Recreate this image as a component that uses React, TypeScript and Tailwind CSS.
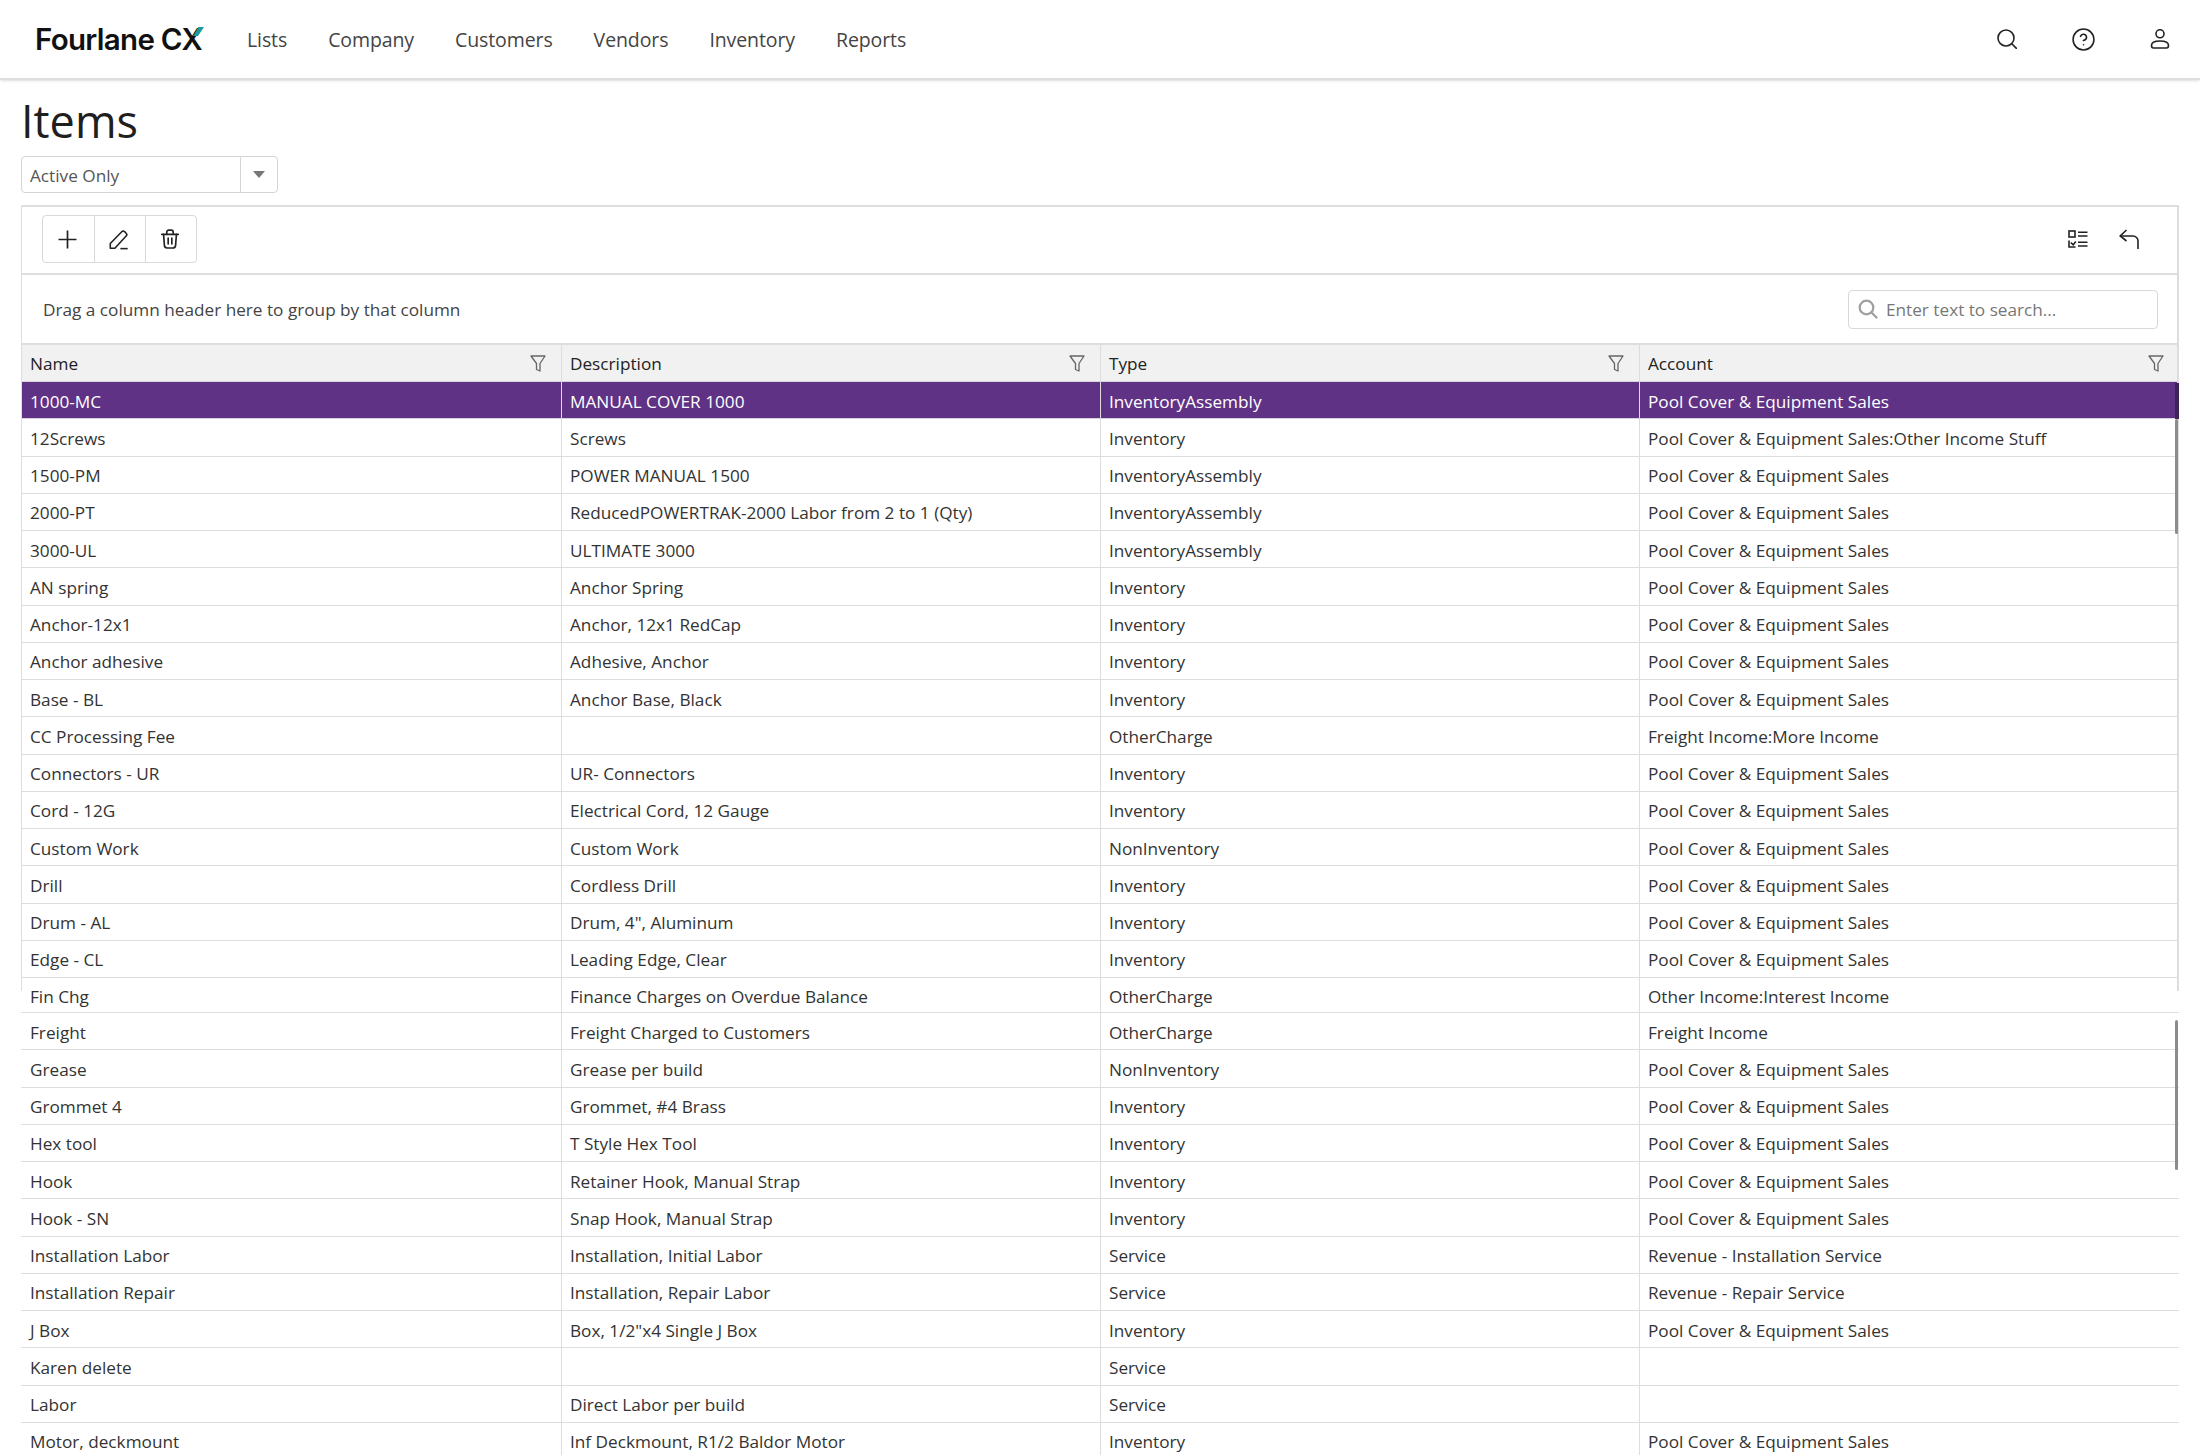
import { CircleHelp } from "lucide-react";

const PCE = "Pool Cover & Equipment Sales";

const topRows = [
  ["1000-MC", "MANUAL COVER 1000", "InventoryAssembly", PCE],
  ["12Screws", "Screws", "Inventory", "Pool Cover & Equipment Sales:Other Income Stuff"],
  ["1500-PM", "POWER MANUAL 1500", "InventoryAssembly", PCE],
  ["2000-PT", "ReducedPOWERTRAK-2000 Labor from 2 to 1 (Qty)", "InventoryAssembly", PCE],
  ["3000-UL", "ULTIMATE 3000", "InventoryAssembly", PCE],
  ["AN spring", "Anchor Spring", "Inventory", PCE],
  ["Anchor-12x1", "Anchor, 12x1 RedCap", "Inventory", PCE],
  ["Anchor adhesive", "Adhesive, Anchor", "Inventory", PCE],
  ["Base - BL", "Anchor Base, Black", "Inventory", PCE],
  ["CC Processing Fee", "", "OtherCharge", "Freight Income:More Income"],
  ["Connectors - UR", "UR- Connectors", "Inventory", PCE],
  ["Cord - 12G", "Electrical Cord, 12 Gauge", "Inventory", PCE],
  ["Custom Work", "Custom Work", "NonInventory", PCE],
  ["Drill", "Cordless Drill", "Inventory", PCE],
  ["Drum - AL", "Drum, 4\", Aluminum", "Inventory", PCE],
  ["Edge - CL", "Leading Edge, Clear", "Inventory", PCE],
];

const bottomRows = [
  ["Freight", "Freight Charged to Customers", "OtherCharge", "Freight Income"],
  ["Grease", "Grease per build", "NonInventory", PCE],
  ["Grommet 4", "Grommet, #4 Brass", "Inventory", PCE],
  ["Hex tool", "T Style Hex Tool", "Inventory", PCE],
  ["Hook", "Retainer Hook, Manual Strap", "Inventory", PCE],
  ["Hook - SN", "Snap Hook, Manual Strap", "Inventory", PCE],
  ["Installation Labor", "Installation, Initial Labor", "Service", "Revenue - Installation Service"],
  ["Installation Repair", "Installation, Repair Labor", "Service", "Revenue - Repair Service"],
  ["J Box", "Box, 1/2\"x4 Single J Box", "Inventory", PCE],
  ["Karen delete", "", "Service", ""],
  ["Labor", "Direct Labor per build", "Service", ""],
  ["Motor, deckmount", "Inf Deckmount, R1/2 Baldor Motor", "Inventory", PCE],
];

const nav = ["Lists", "Company", "Customers", "Vendors", "Inventory", "Reports"];
const headers = ["Name", "Description", "Type", "Account"];

function Funnel() {
  return (
    <svg width="16" height="17" viewBox="0 0 16 17" fill="none" stroke="#666666" strokeWidth="1.3" strokeLinejoin="round">
      <path d="M1 1h14L10 8.5V16L6.5 14.5V8.5z" />
    </svg>
  );
}

function Row({ cells, selected, short }: { cells: string[]; selected?: boolean; short?: boolean }) {
  return (
    <div
      className={`flex border-b ${short ? "h-[35px]" : "h-[37.25px]"} ${
        selected ? "bg-[#5f3285] border-[#d9d2e0] text-white" : "border-[#dddddd] text-[#333333]"
      }`}
    >
      {cells.map((c, i) => (
        <div
          key={i}
          className={`flex items-center pt-[3px] whitespace-nowrap overflow-hidden ${
            i === 0 ? "w-[541px] pl-[9px] border-r border-[#dddddd]" : i < 3 ? "w-[539px] px-2 border-r border-[#dddddd]" : "flex-1 px-2"
          }`}
        >
          {c}
        </div>
      ))}
    </div>
  );
}

export default function App() {
  return (
    <div className="h-[1455px] overflow-hidden bg-white font-['Open_Sans','Noto_Sans',sans-serif] text-[17.2px] text-[#333333]">
      {/* Top bar */}
      <div className="flex h-[80px] items-center border-b-2 border-[#dedede] pl-[35px] pr-[30px] shadow-sm">
        <div className="relative w-[170px] pt-[1px] font-['Inter',sans-serif] text-[29.5px] font-semibold tracking-[-0.7px] text-[#111111]">
          Fourlane CX
          <svg className="absolute right-[1px] top-[11px] h-[9px] w-[11px]" viewBox="0 0 11 9">
            <path d="M5.5 0H11L5 9H0z" fill="#1c9a9a" />
          </svg>
        </div>
        <div className="ml-[42px] flex gap-[41px] pt-[2px] text-[19.5px] tracking-[-0.1px] text-[#444444]">
          {nav.map((n) => (
            <span key={n}>{n}</span>
          ))}
        </div>
        <div className="ml-auto flex items-center gap-[54px] text-[#222222]">
          <svg width="20" height="20" viewBox="0 0 20 20" fill="none" stroke="currentColor" strokeWidth="1.6">
            <circle cx="9" cy="9" r="8" />
            <path d="M15 15l4.5 4.5" strokeLinecap="round" />
          </svg>
          <CircleHelp size={25} strokeWidth={1.5} />
          <svg width="20" height="20" viewBox="0 0 20 20" fill="none" stroke="currentColor" strokeWidth="1.6">
            <circle cx="10" cy="4.8" r="4" />
            <path d="M1.5 16.5C1.5 13.5 5 12 10 12s8.5 1.5 8.5 4.5c0 1.5-.7 2.5-2 2.5h-13c-1.3 0-2-1-2-2.5z" />
          </svg>
        </div>
      </div>

      <div className="pl-[21px] pr-[21px]">
        <h1 className="mt-[10px] h-[66px] text-[45px] leading-[61px] font-normal text-[#1f1f1f]">Items</h1>

        {/* Status filter */}
        <div className="flex h-[37px] w-[257px] items-center rounded-[4px] border border-[#d5d5d5] text-[#555555]">
          <span className="flex-1 pl-2 pt-[2px]">Active Only</span>
          <span className="flex h-full w-[37px] items-center justify-center border-l border-[#d5d5d5]">
            <span className="h-0 w-0 border-x-[6px] border-t-[7px] border-x-transparent border-t-[#777777]" />
          </span>
        </div>

        {/* Grid */}
        <div className="relative mt-[12px] rounded-t-[3px] border-t-2 border-[#dedede]">
          <span className="absolute -top-[2px] left-0 h-[786px] w-px bg-[#dddddd]" />
          <span className="absolute -top-[2px] right-0 h-[786px] w-[2px] bg-[#dddddd]" />
          <span className="absolute right-0 top-[176px] h-[36px] w-[4px] bg-[#3e2358]" />
          <span className="absolute right-[1px] top-[212px] h-[115px] w-[3px] rounded-full bg-[#8c8c8c]" />
          <span className="absolute right-[1px] top-[813px] h-[150px] w-[3px] rounded-full bg-[#8c8c8c]" />

          <div className="flex h-[68px] items-center justify-between border-b-2 border-[#dedede] pb-[2px] pl-[21px] pr-[40px]">
            <div className="flex h-[48px] rounded-[4px] border border-[#d9d9d9] text-[#222222]">
              <div className="flex w-[51px] items-center justify-center pr-[3px]">
                <svg width="19" height="19" viewBox="0 0 19 19" fill="none" stroke="currentColor" strokeWidth="1.7">
                  <path d="M9.5 0.5v18M0.5 9.5h18" />
                </svg>
              </div>
              <div className="flex w-[51px] items-center justify-center border-l border-[#d9d9d9] pr-[3px]">
                <svg width="22" height="22" viewBox="0 0 24 24" fill="none" stroke="currentColor" strokeWidth="1.7" strokeLinejoin="round">
                  <path d="M2.5 22v-5L15 4a2.2 2.2 0 0 1 3.1 0l1.7 1.7a2.2 2.2 0 0 1 0 3.1L7.5 22z" />
                  <path d="M13.5 22.5h8" />
                </svg>
              </div>
              <div className="flex w-[51px] items-center justify-center border-l border-[#d9d9d9] pr-[3px]">
                <svg width="22" height="22" viewBox="0 0 24 24" fill="none" stroke="currentColor" strokeWidth="1.8" strokeLinecap="round">
                  <path d="M5 7l.9 12a3 3 0 0 0 3 2.8h6.2a3 3 0 0 0 3-2.8L19 7" />
                  <path d="M3 7h18" />
                  <path d="M8.5 7V4.5a2.2 2.2 0 0 1 2.2-2.2h2.6a2.2 2.2 0 0 1 2.2 2.2V7" />
                  <path d="M10 11v6.5M14 11v6.5" />
                </svg>
              </div>
            </div>
            <div className="flex items-center gap-[31px] text-[#222222]">
              <svg width="20" height="18" viewBox="0 0 20 18" fill="none" stroke="currentColor" strokeWidth="1.6">
                <rect x="1" y="1" width="6" height="6" />
                <path d="M10 2.2h9.5M10 6h9.5M10 12.2h9.5M10 16h9.5" />
                <path d="M1 10.5V17h6.5M2.8 12.5l2.4 2.4 2.6-3.4" />
              </svg>
              <svg width="20" height="20" viewBox="0 0 20 20" fill="none" stroke="currentColor" strokeWidth="1.6">
                <path d="M7.5 1L1.2 7 7.5 12" />
                <path d="M1.2 7H14a5 5 0 0 1 5 5v8" />
              </svg>
            </div>
          </div>

          <div className="flex h-[70px] items-center justify-between border-b-2 border-[#dedede] pl-[22px] pr-[21px]">
            <span className="pt-[2px] text-[#444444]">Drag a column header here to group by that column</span>
            <div className="flex h-[39px] w-[310px] items-center gap-[6px] rounded-[4px] border border-[#d9d9d9] pl-[7px] text-[#777777]">
              <svg width="24" height="24" viewBox="0 0 24 24" fill="none" stroke="#a0a0a0" strokeWidth="2.3" strokeLinecap="round">
                <circle cx="10.5" cy="10.5" r="6.8" />
                <path d="M15.5 15.5l5 5" />
              </svg>
              <span className="pt-[2px]">Enter text to search...</span>
            </div>
          </div>

          <div className="flex h-[37px] border-b border-[#d9d2e0] bg-[#f1f1f1] font-medium text-[#222222]">
            {headers.map((h, i) => (
              <div
                key={h}
                className={`flex items-center justify-between pr-[15px] ${
                  i === 0 ? "w-[541px] pl-[9px] border-r border-[#dddddd]" : i < 3 ? "w-[539px] pl-2 border-r border-[#dddddd]" : "flex-1 pl-2"
                }`}
              >
                <span className="pt-[2px]">{h}</span>
                <Funnel />
              </div>
            ))}
          </div>

          {topRows.map((r, i) => (
            <Row key={r[0]} cells={r} selected={i === 0} />
          ))}
          <Row cells={["Fin Chg", "Finance Charges on Overdue Balance", "OtherCharge", "Other Income:Interest Income"]} short />
          {bottomRows.map((r) => (
            <Row key={r[0]} cells={r} />
          ))}
        </div>
      </div>
    </div>
  );
}
